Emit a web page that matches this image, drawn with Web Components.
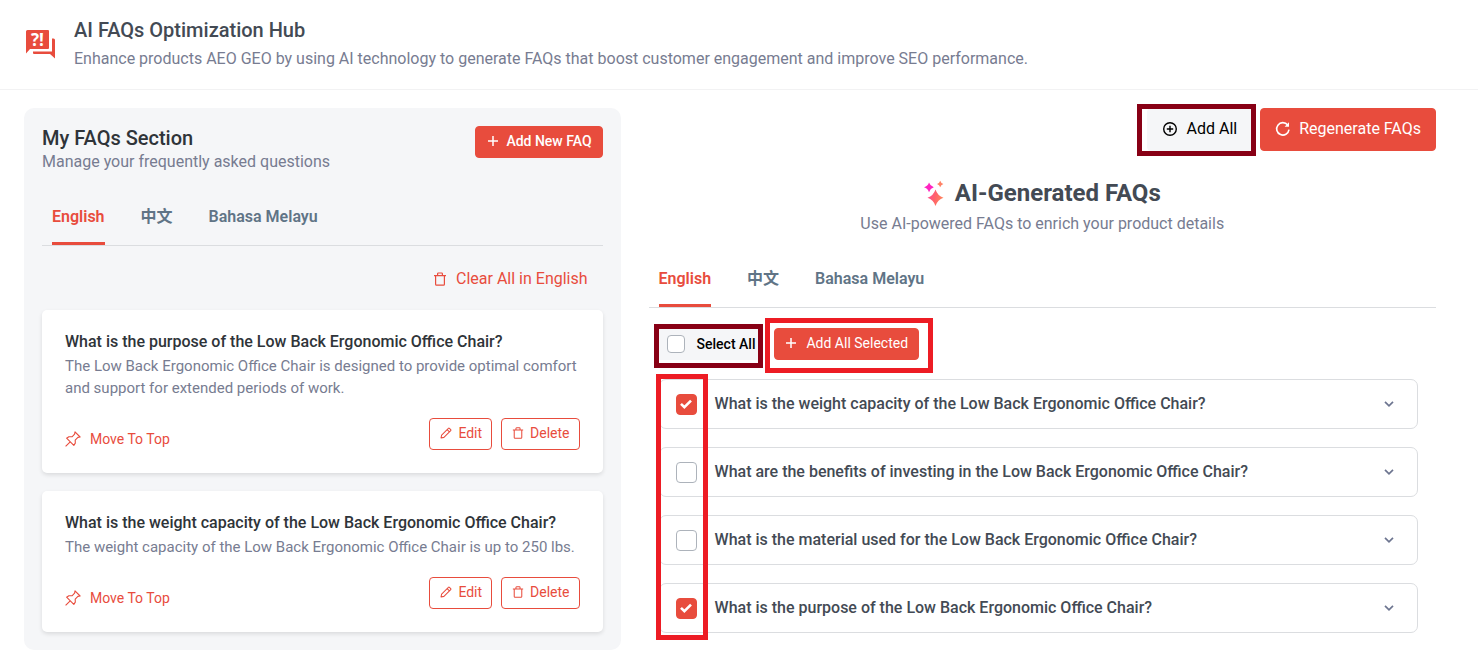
<!DOCTYPE html>
<html lang="en">
<head>
<meta charset="utf-8">
<meta name="viewport" content="width=device-width, initial-scale=1">
<title>AI FAQs Optimization Hub</title>
<style>
  :root {
    --red: #e84c3d;
    --ink: #434a54;
    --dark: #2f3439;
    --muted: #777c91;
    --slate: #607486;
    --line: #dbdde0;
    --panel: #f5f6f8;
  }

  body {
    margin: 0;
    background: #fff;
    font-family: Roboto, "Noto Sans CJK SC", sans-serif;
    font-size: 16px;
    color: var(--ink);
  }
</style>
</head>
<body>
<faq-app></faq-app>

<script>
const ICONS = {
  chat: `<svg viewBox="0 -4 30 37" width="30" height="37" fill="currentColor">
    <path d="M1.500 0H22a1 1 0 0 1 1 1V18a1 1 0 0 1-1 1H4L0 23.500V1.500A1.500 1.500 0 0 1 1.500 0z"/>
    <path d="M26 8.500h1.500A1.500 1.500 0 0 1 29 10v18.500L24 24H8a1 1 0 0 1-1-1v-1.500h19z"/>
    <text x="11.500" y="15.500" text-anchor="middle" fill="#fff" font-family="Open Sans, sans-serif" font-weight="700" font-size="17">?!</text></svg>`,
  plus: `<svg viewBox="0 0 12 12" width="12" height="12" fill="none" stroke="currentColor" stroke-width="1.500"><path d="M6 1v10M1 6h10"/></svg>`,
  plusCircle: `<svg viewBox="0 0 16 16" width="16" height="16" fill="none" stroke="currentColor" stroke-width="1.400"><circle cx="8" cy="8" r="6.300"/><path d="M8 4.800v6.400M4.800 8h6.400"/></svg>`,
  reload: `<svg viewBox="0 0 16 16" width="16" height="16" fill="none" stroke="currentColor" stroke-width="1.600"><path d="M14 8.700A6.200 6.200 0 1 1 12.700 4"/><path d="M14 1.300v4.400H9.600z" fill="currentColor" stroke="none"/></svg>`,
  trash: `<svg viewBox="0 0 14 14" width="14" height="14" fill="none" stroke="currentColor" stroke-width="1.200"><path d="M1 3.600h12M4.600 3.400V1.800q0-.8.800-.8h3.200q.8 0 .8.800v1.600M2.600 3.800v8.400q0 .9.900.9h7q.9 0 .9-.9V3.800"/></svg>`,
  pencil: `<svg viewBox="0 0 14 14" width="14" height="14" fill="none" stroke="currentColor" stroke-width="1.200" stroke-linejoin="round"><path d="M1.200 12.800l.7-3.400 7.900-7.900q.6-.6 1.200 0l1.500 1.500q.6.600 0 1.200l-7.900 7.900zM8.300 3l2.700 2.700"/></svg>`,
  pin: `<svg viewBox="0 0 16 16" width="16" height="16" fill="none" stroke="currentColor" stroke-width="1.100" stroke-linejoin="round"><path d="M10 .9l5.100 5.100-2.200.4-2.700 2.700.1 3-1.500 2.300-7.200-7.200 2.300-1.500 3.100.1 2.600-2.700zM5.200 10.800L.6 15.400"/></svg>`,
  sparkle: `<svg viewBox="0 0 20 26" width="20" height="26"><defs><linearGradient id="g" x1="0" y1="0.300" x2="1" y2="0.600"><stop offset="0" stop-color="#ff4c90"/><stop offset=".5" stop-color="#ff6468"/><stop offset="1" stop-color="#ff8a5c"/></linearGradient></defs>
    <path fill="#ff24c0" d="M5 2.500Q6.200 6.100 9.800 7.300 6.200 8.500 5 12.200 3.800 8.500 0 7.300 3.800 6.100 5 2.500z"/>
    <path fill="#ff8266" d="M16.200.8Q16.900 3.200 19.400 4 16.900 4.800 16.200 7.200 15.500 4.800 13 4 15.500 3.200 16.200.8z"/>
    <path fill="url(#g)" d="M11.500 9.500Q13.600 15.900 19.500 17.700 13.600 19.500 11.500 26 9.400 19.500 3.500 17.700 9.400 15.900 11.500 9.500z"/></svg>`,
  chevron: `<svg viewBox="0 0 10 6" width="10" height="6" fill="none" stroke="currentColor" stroke-width="1.700"><path d="M1 .8l4 4 4-4"/></svg>`,
  check: `<svg viewBox="0 0 12 10" width="12" height="10" fill="none" stroke="#fff" stroke-width="2.600"><path d="M1 4.800l3.400 3.400L11 1.600"/></svg>`
};

class UiIcon extends HTMLElement {
  connectedCallback() {
    this.attachShadow({ mode: 'open' });
    this.shadowRoot.innerHTML = /* html */ `
    <style>
      :host { display: inline-flex; flex: none; }
      svg { display: block; overflow: visible; }
      :host([small]) svg { width: 12px; height: 12px; }
    </style>
    ${ICONS[this.getAttribute('name')]}`;
    this.setAttribute('aria-hidden', 'true');
  }
}
customElements.define('ui-icon', UiIcon);

class UiButton extends HTMLElement {
  connectedCallback() {
    const small = this.hasAttribute('outline') ? 'small' : '';
    this.attachShadow({ mode: 'open' });
    this.shadowRoot.innerHTML = /* html */ `
    <style>
      :host { display: inline-flex; }

      button {
        display: flex;
        align-items: center;
        justify-content: center;
        gap: 8px;
        height: 32px;
        padding: 0 10px 2px;
        border: 1px solid var(--red);
        border-radius: 4px;
        background: var(--red);
        color: #fff;
        font: 400 14px/20px Roboto, sans-serif;
        white-space: nowrap;
        cursor: pointer;
      }

      :host([strong]) button { font-weight: 500; padding: 0 10px 2px 11px; gap: 7px; }
      :host([wide]) button { gap: 9px; }
      :host([outline]) button { background: #fff; color: var(--red); gap: 6px; padding: 0 9px 2px 10px; }
      :host([large]) button { height: 43px; padding: 0 14px 2px; gap: 8px; font-size: 16px; }
      :host([light]) button { background: var(--panel); border-color: var(--panel); color: #000; gap: 9px; }
      :host([text]) button { background: none; border: 0; height: 22px; padding: 0; color: var(--red); font-size: var(--text-size, 14px); gap: 9px; }
    </style>
    <button type="button"><ui-icon name="${this.getAttribute('icon')}" ${small}></ui-icon><slot></slot></button>`;
  }
}
customElements.define('ui-button', UiButton);

class UiTabs extends HTMLElement {
  connectedCallback() {
    const tabs = this.getAttribute('tabs').split(',');
    this.attachShadow({ mode: 'open' });
    this.shadowRoot.innerHTML = /* html */ `
    <style>
      :host { display: block; }

      .tabs {
        display: flex;
        gap: 36px;
        padding-left: 10px;
        border-bottom: 1px solid var(--line);
      }

      button {
        height: 55px;
        padding: 2px 0 0;
        border: 0;
        border-bottom: 3px solid transparent;
        background: none;
        color: var(--slate);
        font: 600 16px/24px Roboto, "Noto Sans CJK SC", sans-serif;
        cursor: pointer;
      }

      button[aria-selected="true"] {
        color: var(--red);
        border-color: var(--red);
      }
    </style>
    <div class="tabs" role="tablist">
      ${tabs.map((tab, i) => `<button type="button" role="tab" aria-selected="${i === 0}">${tab}</button>`).join('')}
    </div>`;

    const buttons = [...this.shadowRoot.querySelectorAll('button')];
    buttons.forEach(button => button.addEventListener('click', () => {
      buttons.forEach(b => b.setAttribute('aria-selected', String(b === button)));
    }));
  }
}
customElements.define('ui-tabs', UiTabs);

class UiCheckbox extends HTMLElement {
  connectedCallback() {
    this.attachShadow({ mode: 'open' });
    this.shadowRoot.innerHTML = /* html */ `
    <style>
      :host { display: flex; }

      label {
        display: flex;
        align-items: center;
        gap: var(--check-gap, 18px);
        cursor: pointer;
      }

      .box {
        display: grid;
        place-items: center;
      }

      .box > * { grid-area: 1 / 1; }

      .text { padding-bottom: var(--check-lift, 2px); }

      input {
        appearance: none;
        width: var(--check-size, 21px);
        height: var(--check-size, 21px);
        margin: 0;
        border: 1px solid #adb3bb;
        border-radius: 4px;
        background: #fff;
      }

      input:checked {
        border-color: var(--red);
        background: var(--red);
      }

      ui-icon { visibility: hidden; pointer-events: none; }
      input:checked + ui-icon { visibility: visible; }
    </style>
    <label>
      <span class="box"><input type="checkbox" ${this.hasAttribute('checked') ? 'checked' : ''}><ui-icon name="check"></ui-icon></span>
      <span class="text">${this.getAttribute('label')}</span>
    </label>`;
  }
}
customElements.define('ui-checkbox', UiCheckbox);

// Frame drawn over the slotted content to call attention to it
class UiHighlight extends HTMLElement {
  connectedCallback() {
    this.attachShadow({ mode: 'open' });
    this.shadowRoot.innerHTML = /* html */ `
    <style>
      :host { display: block; position: relative; }

      .frame {
        position: absolute;
        inset: var(--frame-inset, -4px);
        border: 5px solid var(--frame-color, #ed1c24);
        pointer-events: none;
      }
    </style>
    <slot></slot>
    <div class="frame" part="frame"></div>`;
  }
}
customElements.define('ui-highlight', UiHighlight);

class FaqCard extends HTMLElement {
  connectedCallback() {
    this.attachShadow({ mode: 'open' });
    this.shadowRoot.innerHTML = /* html */ `
    <style>
      :host {
        display: block;
        padding: 21px 23px 23px;
        border-radius: 5px;
        background: #fff;
        box-shadow: 0 2px 4px #0000001c;
      }

      h3 {
        margin: 0 0 2px;
        font: 500 16px/22px Roboto, sans-serif;
        color: var(--dark);
      }

      p {
        margin: 0 0 19px;
        font-size: 15px;
        line-height: 22px;
        color: var(--muted);
      }

      .actions {
        display: flex;
        align-items: center;
        gap: 9px;
      }

      .move { margin-right: auto; padding-top: 10px; }
    </style>
    <h3>${this.getAttribute('question')}</h3>
    <p><slot></slot></p>
    <div class="actions">
      <ui-button class="move" text icon="pin">Move To Top</ui-button>
      <ui-button outline icon="pencil">Edit</ui-button>
      <ui-button outline icon="trash">Delete</ui-button>
    </div>`;
  }
}
customElements.define('faq-card', FaqCard);

class FaqRow extends HTMLElement {
  connectedCallback() {
    this.attachShadow({ mode: 'open' });
    this.shadowRoot.innerHTML = /* html */ `
    <style>
      :host {
        display: flex;
        align-items: center;
        justify-content: space-between;
        box-sizing: border-box;
        height: 50px;
        padding: 0 18px 0 16px;
        border: 1px solid var(--line);
        border-radius: 7px;
        background: #fff;
        font-weight: 500;
      }

      button {
        display: grid;
        place-items: center;
        width: 20px;
        height: 20px;
        padding: 0;
        border: 0;
        background: none;
        color: #6d7590;
        cursor: pointer;
      }
    </style>
    <ui-checkbox label="${this.getAttribute('question')}" ${this.hasAttribute('checked') ? 'checked' : ''}></ui-checkbox>
    <button type="button" aria-label="Show answer"><ui-icon name="chevron"></ui-icon></button>`;
  }
}
customElements.define('faq-row', FaqRow);

class FaqHeader extends HTMLElement {
  connectedCallback() {
    this.attachShadow({ mode: 'open' });
    this.shadowRoot.innerHTML = /* html */ `
    <style>
      :host {
        display: flex;
        align-items: center;
        gap: 18px;
        padding: 16px 26px;
        border-bottom: 1px solid #f2f2f3;
      }

      ui-icon { color: var(--red); }

      h1 {
        margin: 0;
        font: 500 20px/28px Roboto, sans-serif;
      }

      p {
        margin: 0;
        line-height: 29px;
        color: var(--muted);
      }
    </style>
    <ui-icon name="chat"></ui-icon>
    <div>
      <h1><slot name="title"></slot></h1>
      <p><slot></slot></p>
    </div>`;
  }
}
customElements.define('faq-header', FaqHeader);

class MyFaqs extends HTMLElement {
  connectedCallback() {
    this.attachShadow({ mode: 'open' });
    this.shadowRoot.innerHTML = /* html */ `
    <style>
      :host {
        display: block;
        padding: 18px;
        border-radius: 10px;
        background: var(--panel);
      }

      header {
        display: flex;
        justify-content: space-between;
        align-items: flex-start;
      }

      h2 {
        margin: 0;
        font: 500 20px/24px Roboto, sans-serif;
        color: var(--dark);
      }

      p {
        margin: 0;
        line-height: 24px;
        color: var(--muted);
      }

      ui-tabs { margin-top: 16px; }

      .clear {
        --text-size: 16px;
        display: flex;
        justify-content: flex-end;
        padding: 22px 15px 20px;
      }

      .list {
        display: grid;
        gap: 18px;
      }
    </style>
    <header>
      <div>
        <h2>My FAQs Section</h2>
        <p>Manage your frequently asked questions</p>
      </div>
      <ui-button strong icon="plus">Add New FAQ</ui-button>
    </header>
    <ui-tabs tabs="English,中文,Bahasa Melayu"></ui-tabs>
    <div class="clear"><ui-button text icon="trash">Clear All in English</ui-button></div>
    <div class="list">
      <faq-card question="What is the purpose of the Low Back Ergonomic Office Chair?">The Low Back Ergonomic Office Chair is designed to provide optimal comfort and support for extended periods of work.</faq-card>
      <faq-card question="What is the weight capacity of the Low Back Ergonomic Office Chair?">The weight capacity of the Low Back Ergonomic Office Chair is up to 250 lbs.</faq-card>
    </div>`;
  }
}
customElements.define('my-faqs', MyFaqs);

class GeneratedFaqs extends HTMLElement {
  connectedCallback() {
    this.attachShadow({ mode: 'open' });
    this.shadowRoot.innerHTML = /* html */ `
    <style>
      :host { display: block; }

      .top {
        display: flex;
        justify-content: flex-end;
        gap: 8px;
      }

      .top ui-highlight {
        --frame-color: #880015;
        --frame-inset: -4px -4px -5px -10px;
      }

      h2 {
        display: flex;
        align-items: center;
        justify-content: center;
        gap: 11px;
        margin: 27px 0 0;
        font: 700 24px/30px Roboto, sans-serif;
      }

      p {
        margin: 4px 0 0;
        line-height: 24px;
        text-align: center;
        color: var(--muted);
      }

      ui-tabs { margin-top: 16px; }

      .select {
        display: flex;
        gap: 16px;
        padding: 20px 0 19px 10px;
      }

      .all {
        --check-size: 18px;
        --check-gap: 12px;
        --check-lift: 0px;
        --frame-color: #880015;
        --frame-inset: -4px -5px -8px -5px;
        height: 32px;
      }

      .all ui-checkbox {
        height: 32px;
        padding: 0 3px 0 8px;
        background: var(--panel);
        color: #000;
        font-size: 14px;
        font-weight: 500;
      }

      .add { --frame-inset: -10px -14px -13px -9px; }

      .list {
        --frame-inset: -5px auto -7px -3px;
        margin: 0 18px 0 10px;
      }

      .list::part(frame) { width: 42px; }

      .rows {
        display: grid;
        gap: 18px;
      }
    </style>
    <div class="top">
      <ui-highlight><ui-button large light icon="plusCircle">Add All</ui-button></ui-highlight>
      <ui-button large icon="reload">Regenerate FAQs</ui-button>
    </div>
    <h2><ui-icon name="sparkle"></ui-icon>AI-Generated FAQs</h2>
    <p>Use AI-powered FAQs to enrich your product details</p>
    <ui-tabs tabs="English,中文,Bahasa Melayu"></ui-tabs>
    <div class="select">
      <ui-highlight class="all"><ui-checkbox label="Select All"></ui-checkbox></ui-highlight>
      <ui-highlight class="add"><ui-button wide icon="plus">Add All Selected</ui-button></ui-highlight>
    </div>
    <ui-highlight class="list">
      <div class="rows">
        <faq-row checked question="What is the weight capacity of the Low Back Ergonomic Office Chair?"></faq-row>
        <faq-row question="What are the benefits of investing in the Low Back Ergonomic Office Chair?"></faq-row>
        <faq-row question="What is the material used for the Low Back Ergonomic Office Chair?"></faq-row>
        <faq-row checked question="What is the purpose of the Low Back Ergonomic Office Chair?"></faq-row>
      </div>
    </ui-highlight>`;
  }
}
customElements.define('generated-faqs', GeneratedFaqs);

class FaqApp extends HTMLElement {
  connectedCallback() {
    this.attachShadow({ mode: 'open' });
    this.shadowRoot.innerHTML = /* html */ `
    <style>
      :host { display: block; }

      main {
        display: grid;
        grid-template-columns: minmax(0, 1fr) minmax(0, 1.32fr);
        align-items: start;
        gap: 28px;
        padding: 18px 42px 7px 24px;
      }
    </style>
    <faq-header><span slot="title">AI FAQs Optimization Hub</span>Enhance products AEO GEO by using AI technology to generate FAQs that boost customer engagement and improve SEO performance.</faq-header>
    <main>
      <my-faqs></my-faqs>
      <generated-faqs></generated-faqs>
    </main>`;
  }
}
customElements.define('faq-app', FaqApp);
</script>
</body>
</html>
